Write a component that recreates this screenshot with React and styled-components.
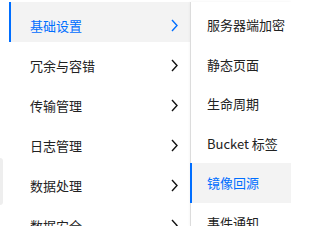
import React from 'react'
import styled, { createGlobalStyle } from 'styled-components'

const GlobalStyle = createGlobalStyle`
  html, body {
    margin: 0;
    padding: 0;
    background: #fff;
  }
  body {
    font-family: "Noto Sans CJK SC", "Noto Sans", sans-serif;
  }
`;

const Page = styled.div`
  position: relative;
  width: 291px;
  height: 226px;
  overflow: hidden;
  display: flex;
  padding-top: 2px;
  box-sizing: border-box;
  background: #fff;
`;

// grey tab peeking out from the page behind the menu
const SideTab = styled.div`
  position: absolute;
  left: 0;
  top: 158px;
  width: 3px;
  height: 47px;
  background: #eeeeee;
  border-radius: 0 3px 3px 0;
`;

const Menu = styled.ul`
  list-style: none;
  margin: 0 0 0 9px;
  padding: 0;
  width: 181px;
  flex-shrink: 0;
`;

const MenuItem = styled.li`
  height: 40px;
  box-sizing: border-box;
  padding: 6px 12px 0 ${p => (p.$active ? 19 : 21)}px;
  display: flex;
  align-items: center;
  justify-content: space-between;
  font-size: 13px;
  color: ${p => (p.$active ? '#006eff' : '#222')};
  background: ${p => (p.$active ? '#f3f3f3' : 'transparent')};
  border-left: ${p => (p.$active ? '2px solid #006eff' : 'none')};
  white-space: nowrap;
`;

const Chevron = ({ color }) => (
  <svg width="7" height="13" viewBox="0 0 7 13" fill="none">
    <polyline points="1,1 6,6.5 1,12" stroke={color} strokeWidth="1.4" />
  </svg>
);

const SubMenu = styled.ul`
  list-style: none;
  margin: 0;
  padding: 3px 0 0;
  flex: 1;
  background: #fff;
  border-left: 1px solid #dcdcdc;
  box-shadow: 0 0 3px rgba(0, 0, 0, 0.06);
`;

const SubItem = styled.li`
  position: relative;
  height: 39.5px;
  box-sizing: border-box;
  padding-left: 16px;
  display: flex;
  align-items: center;
  font-size: 13px;
  color: ${p => (p.$active ? '#006eff' : '#222')};
  background: ${p => (p.$active ? '#f3f3f3' : 'transparent')};
  white-space: nowrap;

  &::before {
    content: '';
    display: ${p => (p.$active ? 'block' : 'none')};
    position: absolute;
    left: -1px;
    top: 0;
    bottom: 0;
    width: 2px;
    background: #006eff;
  }
`;

const menu = [
  { label: '基础设置', active: true },
  { label: '冗余与容错' },
  { label: '传输管理' },
  { label: '日志管理' },
  { label: '数据处理' },
  { label: '数据安全' },
];

const sub = [
  { label: '服务器端加密' },
  { label: '静态页面' },
  { label: '生命周期' },
  { label: 'Bucket 标签' },
  { label: '镜像回源', active: true },
  { label: '事件通知' },
];

export default function App() {
  return (
    <Page>
      <GlobalStyle />
      <SideTab />
      <Menu>
        {menu.map(m => (
          <MenuItem key={m.label} $active={m.active}>
            <span>{m.label}</span>
            <Chevron color={m.active ? '#006eff' : '#111'} />
          </MenuItem>
        ))}
      </Menu>
      <SubMenu>
        {sub.map(s => (
          <SubItem key={s.label} $active={s.active}>{s.label}</SubItem>
        ))}
      </SubMenu>
    </Page>
  )
}
